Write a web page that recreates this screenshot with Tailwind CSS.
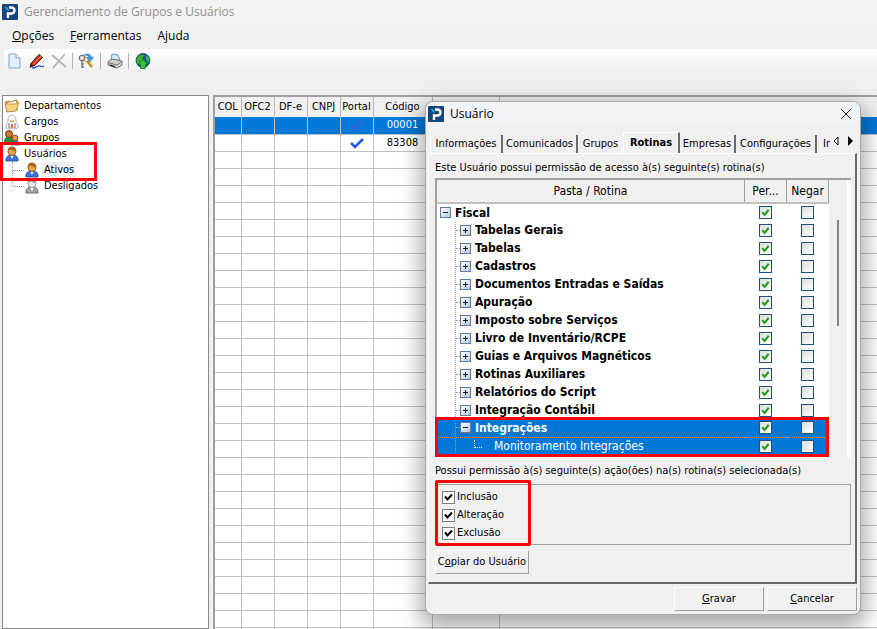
<!DOCTYPE html>
<html lang="pt-BR">
<head>
  <meta charset="UTF-8" />
  <meta name="viewport" content="width=device-width, initial-scale=1" />
  <title>Gerenciamento de Grupos e Usuários</title>
  <script src="https://cdn.jsdelivr.net/npm/@tailwindcss/browser@4"></script>
</head>
<body class="relative h-screen overflow-hidden flex flex-col bg-[#f0f0f0] text-black text-[11px] leading-4 font-['DejaVu_Sans_Condensed','DejaVu_Sans',sans-serif]">

  <!-- Ícones reutilizados -->
  <svg class="hidden">
    <symbol id="logo" viewBox="0 0 16 16">
      <rect width="16" height="16" rx="1" fill="#15457c" />
      <path d="M6 14V9.500h3.500a3 3 0 0 0 0-6H7" fill="none" stroke="#fff" stroke-width="2.400" />
      <path d="M3.500 3l3 3.500" stroke="#22b5e8" stroke-width="1.600" />
    </symbol>
    <symbol id="user" viewBox="0 0 16 16">
      <path d="M2 15c-.6-4 2-6 6-6s6.600 2 6 6z" fill="#3d74dc" stroke="#1d3f8c" stroke-width=".8" />
      <path d="M6.500 9.500L8 13l1.500-3.500z" fill="#fff" />
      <circle cx="8" cy="5.500" r="4" fill="#efa04c" stroke="#8c4a12" stroke-width=".8" />
      <path d="M3.800 6C3 1 7-.5 10 1c2 1 2.600 3 2 4.500C10 5 8 4 6.500 3.500 5 4 4.800 5 3.800 6z" fill="#a8601c" />
    </symbol>
    <symbol id="tick" viewBox="0 0 12 12">
      <path d="M2.500 5.500l2.500 3 4.500-5.500" fill="none" stroke="#1c9c1c" stroke-width="2.200" />
    </symbol>
  </svg>

  <!-- Barra de título -->
  <header class="flex items-center gap-1.5 h-6 px-0.5 bg-[#f3f3f3] text-[#919191] text-[12px] font-['Open_Sans',sans-serif]">
    <svg class="size-4"><use href="#logo" /></svg>
    <h1>Gerenciamento de Grupos e Usuários</h1>
  </header>

  <!-- Menu -->
  <nav class="flex items-center gap-4 h-6 px-3 text-[12px] font-['Open_Sans',sans-serif]">
    <a href="#"><u>O</u>pções</a>
    <a href="#"><u>F</u>erramentas</a>
    <a href="#">Ajuda</a>
  </nav>

  <!-- Barra de ferramentas -->
  <div class="flex items-center h-6 ml-1 pl-0.5 mt-px rounded-l bg-linear-to-b from-[#fdfdfd] to-[#f0f0f0]">
    <button aria-label="Novo" class="w-[23px]"><svg class="size-4" viewBox="0 0 16 16"><path d="M3 1h7l4 4v10H3z" fill="#e3eeff" stroke="#8aa3c4" /><path d="M10 1v4h4" fill="#fff" stroke="#8aa3c4" /></svg></button>
    <button aria-label="Editar" class="w-[22px]"><svg class="size-4" viewBox="0 0 16 16"><path d="M1.500 11L10 1.500l3.500 3L5 13z" fill="#d42a1a" stroke="#4c120a" /><path d="M4 11.500L12 3" stroke="#f2936a" /><path d="M1.500 11L.5 15 5 13z" fill="#2b1a10" /><path d="M3 15c5 0 5-3 8-2s2 1 4 0" fill="none" stroke="#2c62b8" stroke-width="1.400" /></svg></button>
    <button aria-label="Excluir" class="w-[21px]"><svg class="size-4" viewBox="0 0 16 16"><path d="M1 2l14 12M14 1L2 15" stroke="#b4b4b4" stroke-width="1.700" /></svg></button>
    <span class="w-px h-4 mr-[5px] bg-[#b5b5b5]"></span>
    <button aria-label="Permissões" class="w-[22px]"><svg class="size-4" viewBox="0 0 16 16"><circle cx="4" cy="5" r="2.700" fill="#eee" stroke="#707070" stroke-width="1.300" /><path d="M4 8v7M4 11h2M4 14h2" stroke="#777" stroke-width="1.500" /><path d="M9 8l5 6" stroke="#c98518" stroke-width="2.500" /><circle cx="8.500" cy="6.500" r="2" fill="#fff" stroke="#c98518" /><path d="M6 2c4-2 7-1 7 2h2.500L12 9 8.500 4.500H11C11 3 9 2 6 2z" fill="#3ba3e8" stroke="#1b6cae" stroke-width=".5" /></svg></button>
    <span class="w-px h-4 mr-1.5 bg-[#b5b5b5]"></span>
    <button aria-label="Imprimir" class="w-[21px]"><svg class="size-4" viewBox="0 0 16 16"><path d="M4 7l1-6 6 1 2 5z" fill="#d7e8ff" stroke="#6b94cc" /><path d="M1 9l4-3 10 2v4l-5 3-9-3z" fill="#d0d0d0" stroke="#777" /><path d="M1 9.500l9 2.500 5-3.500" fill="none" stroke="#777" /><path d="M3 12l5 2" stroke="#333" stroke-width="1.500" /></svg></button>
    <span class="w-px h-4 mr-1.5 bg-[#b5b5b5]"></span>
    <button aria-label="Web"><svg class="size-4" viewBox="0 0 16 16"><circle cx="8" cy="7.500" r="7" fill="#1759a8" stroke="#123f6c" stroke-width=".8" /><path d="M1.500 6c1-4 5-5 8-4L7 5l2 2-4 3-3 1zM11 2l3.500 3v5l-3.500-3z" fill="#3dae28" /><path d="M8 6.500l5 5h-2.500v4h-5v-4H3z" fill="#34c634" stroke="#0c6c12" stroke-width=".7" /></svg></button>
  </div>

  <main class="flex flex-1 gap-1.5 min-h-0 mt-[22px]">
    <!-- Árvore -->
    <aside class="w-[207px] shrink-0 ml-0.5 mr-[-2px] pl-px pt-[2px] bg-white border border-[#828790]">
      <ul>
        <li class="flex gap-1"><svg class="size-4" viewBox="0 0 16 16"><path d="M1 4l4-1 1 1 7-2v10L3 14z" fill="#e5ad45" stroke="#926216" stroke-width=".7" /><path d="M4 5l8-2 1 8-8 2z" fill="#fff" /><path d="M1 6l10 0 4-2-3 9-9 1z" fill="#f8d77c" stroke="#a47622" stroke-width=".7" /></svg>Departamentos</li>
        <li class="flex gap-1"><svg class="size-4" viewBox="0 0 16 16"><path d="M2 14c0-4 1-5 2-7 0-4 1-6 4-6s4 2 4 6c1 2 2 3 2 7-2 1-10 1-12 0z" fill="#f3f3f3" stroke="#aaa" stroke-width=".8" /><path d="M6 6l2 1 2-1v2H6z" fill="#e09a38" /><path d="M5 14V9M11 14V9" stroke="#777" /><path d="M7 14l1-4 1 4" fill="none" stroke="#de5432" /></svg>Cargos</li>
        <li class="flex gap-1"><svg class="size-4" viewBox="0 0 16 16"><path d="M0 13c0-4 2-6 5-6s5 2 5 6z" fill="#23952d" stroke="#10551a" stroke-width=".7" /><circle cx="5" cy="4" r="3.500" fill="#c97c25" stroke="#6b3a0c" /><path d="M7 15c0-3 1-5 4-5s4 2 4 5z" fill="#3d74dc" stroke="#1d3f8c" stroke-width=".7" /><circle cx="11" cy="8" r="2.800" fill="#efa04c" stroke="#8c4a12" /></svg>Grupos</li>
        <li>
          <div class="flex gap-1"><svg class="size-4"><use href="#user" /></svg>Usuários</div>
          <ul class="ml-2 border-l border-dotted border-[#909090] h-6">
            <li class="flex items-center"><span class="w-[11px] border-t border-dotted border-[#909090]"></span><svg class="size-4 mr-0.5"><use href="#user" /></svg><span class="px-0.5 bg-[#f0f0f0]">Ativos</span></li>
            <li class="flex items-center"><span class="w-[11px] border-t border-dotted border-[#909090]"></span><svg class="size-4 mr-1 grayscale brightness-150"><use href="#user" /></svg>Desligados</li>
          </ul>
        </li>
      </ul>
    </aside>

    <!-- Grade de usuários -->
    <section class="flex-1 min-w-0 overflow-hidden bg-white border-l-2 border-t-2 border-[#a0a0a0]">
      <table class="table-fixed w-full border-collapse">
        <colgroup>
          <col class="w-[26px]" /><col class="w-[33px]" /><col class="w-[33px]" /><col class="w-[33px]" /><col class="w-[33px]" /><col class="w-[59px]" /><col class="w-[67px]" /><col />
        </colgroup>
        <thead>
          <tr class="h-5 bg-[#f0f0f0] *:border-r *:border-[#b8b8b8] *:last:border-r-0 *:font-normal *:p-0 *:whitespace-nowrap">
            <th>COL</th><th>OFC2</th><th>DF-e</th><th>CNPJ</th><th>Portal</th><th>Código</th><th></th><th></th>
          </tr>
        </thead>
        <tbody id="users"></tbody>
      </table>
    </section>
  </main>

  <div class="absolute left-0 top-[142px] w-[97px] h-[39px] border-3 border-[#fb0007]"></div>

  <!-- Janela Usuário -->
  <div role="dialog" aria-label="Usuário" class="absolute left-[425px] right-4 top-[101px] h-[514px] flex flex-col px-0.5 rounded-lg bg-[#f0f0f0] border border-[#a9a9a9] shadow-[0_8px_22px_4px_rgba(0,0,0,0.35)]">
    <header class="-mx-0.5 flex items-center h-6 pl-0.5 pr-2 gap-1.5 bg-[#eff4f9] rounded-t-lg text-[12px] font-['Open_Sans',sans-serif]">
      <svg class="size-4"><use href="#logo" /></svg>
      <h2 class="flex-1">Usuário</h2>
      <button aria-label="Fechar"><svg class="size-3" viewBox="0 0 12 12"><path d="M1 1l10 10M11 1L1 11" stroke="#222" /></svg></button>
    </header>

    <!-- Abas -->
    <div class="flex items-end h-[27px] pl-0.5 pr-1">
      <div role="tablist" class="flex flex-1 items-end min-w-0 overflow-hidden whitespace-nowrap">
        <button role="tab" class="h-[18px] w-[73px] shrink-0 border-l border-l-white border-r-2 border-r-[#696969]">Informações</button>
        <button role="tab" class="h-[18px] w-[75px] shrink-0 border-r-2 border-[#696969]">Comunicados</button>
        <button role="tab" class="h-[18px] w-[45px] shrink-0">Grupos</button>
        <button role="tab" aria-selected="true" class="h-[21px] w-[57px] shrink-0 font-bold border-r-2 border-l border-t border-t-white border-l-white border-r-[#696969]">Rotinas</button>
        <button role="tab" class="h-[18px] w-[56px] shrink-0 border-r-2 border-[#696969]">Empresas</button>
        <button role="tab" class="h-[18px] w-[81px] shrink-0 border-r-2 border-[#696969]">Configurações</button>
        <button role="tab" class="h-[18px] pl-1.5 shrink-0">Integrações</button>
      </div>
      <button aria-label="Abas anteriores" class="pl-0.5 pb-1.5"><svg class="w-2 h-3" viewBox="0 0 8 12"><path d="M6 2v8L2 6z" fill="#fff" stroke="#000" /></svg></button>
      <button aria-label="Próximas abas" class="pl-1.5 pb-1.5"><svg class="w-2 h-3" viewBox="0 0 8 12"><path d="M2 1v10l5-5z" /></svg></button>
    </div>

    <div class="flex flex-1 flex-col min-h-0 pl-1.5 pr-1 border-t border-l border-t-white border-l-white border-r-2 border-b-2 border-r-[#696969] border-b-[#696969] mr-px">
      <p class="mt-1.5 mb-0.5 whitespace-nowrap">Este Usuário possui permissão de acesso à(s) seguinte(s) rotina(s)</p>

      <div class="relative flex h-[279px] border-t-2 border-l-2 border-[#a0a0a0] bg-white">
        <table class="flex-1 table-fixed border-collapse w-full h-fit text-[12px]">
          <colgroup><col /><col class="w-[42px]" /><col class="w-[42px]" /></colgroup>
          <thead>
            <tr class="h-[23px] bg-[#f0f0f0] border-b-2 border-[#c0c0c0] *:font-normal *:border-r *:border-r-[#a0a0a0] *:p-0">
              <th>Pasta / Rotina</th><th>Per...</th><th>Negar</th>
            </tr>
          </thead>
          <tbody id="routines"></tbody>
        </table>
        <div class="w-[18px] mr-1 bg-[#f0f0f0]">
          <div class="w-0.5 h-[106px] mt-10 ml-2 bg-[#858585]"></div>
        </div>
        <div class="absolute -left-0.5 right-[22px] bottom-0 h-10 border-3 border-[#fb0007]"></div>
      </div>

      <p class="mt-1.5 mb-[5px] whitespace-nowrap">Possui permissão à(s) seguinte(s) ação(ões) na(s) rotina(s) selecionada(s)</p>

      <fieldset class="relative h-[61px] pl-1.5 pt-[3px] border border-[#a0a0a0]">
        <label class="flex items-center gap-0.5 h-[18px]"><input type="checkbox" checked class="peer sr-only" /><svg class="size-[13px] bg-white border border-[#7a7a7a]" viewBox="0 0 11 11"><path d="M2 4.500l2.500 3L9 2.500" fill="none" stroke="#000" stroke-width="2" /></svg>Inclusão</label>
        <label class="flex items-center gap-0.5 h-[18px]"><input type="checkbox" checked class="peer sr-only" /><svg class="size-[13px] bg-white border border-[#7a7a7a]" viewBox="0 0 11 11"><path d="M2 4.500l2.500 3L9 2.500" fill="none" stroke="#000" stroke-width="2" /></svg>Alteração</label>
        <label class="flex items-center gap-0.5 h-[18px]"><input type="checkbox" checked class="peer sr-only" /><svg class="size-[13px] bg-white border border-[#7a7a7a]" viewBox="0 0 11 11"><path d="M2 4.500l2.500 3L9 2.500" fill="none" stroke="#000" stroke-width="2" /></svg>Exclusão</label>
        <div class="absolute -left-px -top-[5px] w-24 h-[66px] border-3 border-[#fb0007] rounded-xs"></div>
      </fieldset>

      <button class="mt-[5px] w-[94px] h-6 whitespace-nowrap border border-t-white border-l-white border-r-[#a0a0a0] border-b-[#a0a0a0]">C<u>o</u>piar do Usuário</button>
    </div>

    <div class="flex justify-end gap-[3px] mt-[3px] mb-[3px] mr-px">
      <button class="w-[90px] h-6 border border-t-white border-l-white border-r-[#a0a0a0] border-b-[#a0a0a0]"><u>G</u>ravar</button>
      <button class="w-[90px] h-6 border border-t-white border-l-white border-r-[#a0a0a0] border-b-[#a0a0a0]"><u>C</u>ancelar</button>
    </div>
  </div>

  <script>
    // Grade: as duas primeiras linhas têm dados, o resto fica vazio
    const codes = ["00001", "83308"];
    const users = document.getElementById('users');
    for (let i = 0; i < 31; i++) {
      const tr = document.createElement('tr');
      tr.className = "h-[17px] *:border-r *:border-b *:border-[#c0c0c0] *:last:border-r-0 *:p-0 " + (i === 0 ? "bg-[#0078d7] text-white" : "");
      const check = i < 2 ? `<svg class="w-4 h-3 mx-auto" viewBox="0 0 16 12"><path d="M2 6l4 4 8-8" fill="none" stroke="${i ? "#2458e8" : "#3a62e0"}" stroke-width="2.500"/></svg>` : "";
      tr.innerHTML = `<td></td><td></td><td></td><td></td><td>${check}</td><td class="text-center leading-3">${codes[i] || ""}</td><td></td><td></td>`;
      users.appendChild(tr);
    }

    const routines = ["Fiscal", "Tabelas Gerais", "Tabelas", "Cadastros", "Documentos Entradas e Saídas", "Apuração", "Imposto sobre Serviços", "Livro de Inventário/RCPE", "Guias e Arquivos Magnéticos", "Rotinas Auxiliares", "Relatórios do Script", "Integração Contábil", "Integrações", "Monitoramento Integrações"];
    const box = (name, on) => `<label class="block size-[13px] mx-auto border border-[#1c5180] bg-linear-to-br from-[#dcdcd7] to-white"><input type="checkbox" class="sr-only" aria-label="${name}" ${on ? "checked" : ""}>${on ? '<svg class="size-[11px]"><use href="#tick"/></svg>' : ""}</label>`;
    const body = document.getElementById('routines');

    routines.forEach((name, i) => {
      const last = i === 13;
      const open = i === 0 || i === 12;
      const tr = document.createElement('tr');
      tr.className = "h-[18px] *:p-0 " + (i >= 12 ? "bg-[#0078d7] text-white " : "") + (i === 12 ? "border-b border-dotted border-[#e09050]" : "");
      const toggle = last
        ? `<span class="w-2 h-2 mb-1 ml-3.5 mr-2 border-l border-b border-dotted border-white"></span>`
        : `<button aria-label="${name}" class="size-[11px] shrink-0 border border-[#5f7ca6] bg-linear-to-br from-white to-[#b9c8dc]"><svg class="size-[9px]" viewBox="0 0 9 9"><path d="${open ? "M2 4.500h5" : "M2 4.500h5M4.500 2v5"}" stroke="#123"/></svg></button>`;
      const lead = i === 0 ? "" : `<span class="w-[5px] h-[17px] shrink-0 ml-[15px] border-l border-dotted border-[#a0a0a0] flex items-center">${last ? "" : '<span class="w-1 border-t border-dotted border-[#a0a0a0]"></span>'}</span>`;
      tr.innerHTML = `<td><div class="flex items-center h-[17px] pl-[3px] leading-4 whitespace-nowrap ${last ? "" : "font-bold"}">${lead}${toggle}<span class="pl-1">${name}</span></div></td><td>${box("Permitir " + name, true)}</td><td>${box("Negar " + name, false)}</td>`;
      body.appendChild(tr);
    });
  </script>
</body>
</html>
